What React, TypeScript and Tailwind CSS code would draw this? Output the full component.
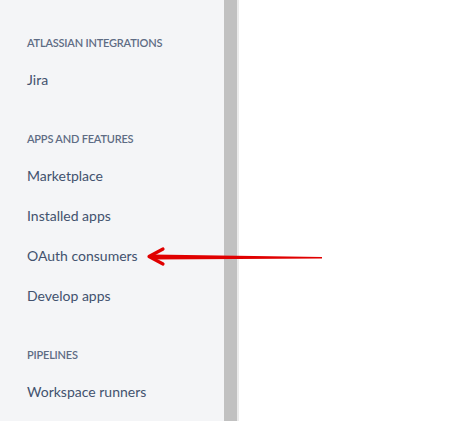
import React from 'react';

const sections = [
  { title: 'Atlassian integrations', items: ['Jira'] },
  { title: 'Apps and features', items: ['Marketplace', 'Installed apps', 'OAuth consumers', 'Develop apps'] },
  { title: 'Pipelines', items: ['Workspace runners'] },
];

const App: React.FC = () => {
  return (
    <div className="relative w-[469px] h-[421px] overflow-hidden bg-white flex" style={{ fontFamily: 'Lato, "Noto Sans", sans-serif' }}>
      <nav className="w-[224px] h-full bg-[#f4f5f7] pt-[35px] px-[27px] flex flex-col gap-8">
        {sections.map((s) => (
          <div key={s.title} className="flex flex-col">
            <div className="h-4 leading-4 text-[11px] font-semibold uppercase tracking-[-0.2px] text-[#5e6c84]">{s.title}</div>
            <ul className="mt-2 flex flex-col">
              {s.items.map((item) => (
                <li key={item} className="h-10 flex items-center text-[14px] text-[#42526e]">
                  {item}
                </li>
              ))}
            </ul>
          </div>
        ))}
      </nav>
      <div className="w-[13px] h-full bg-[#c1c1c1]" />
      <div className="w-[2px] h-full bg-[#ebebeb]" />
      <div className="flex-1 h-full bg-white" />

      <svg className="absolute left-0 top-0 pointer-events-none" width="469" height="421" viewBox="0 0 469 421">
        <polygon points="152,254.5 322,257 322,258.5 152,259.5" fill="#e00000" />
        <path d="M163 249 L149 256.5 L163 264" fill="none" stroke="#e00000" strokeWidth="3.2" strokeLinecap="round" strokeLinejoin="round" />
      </svg>
    </div>
  );
};

export default App;
